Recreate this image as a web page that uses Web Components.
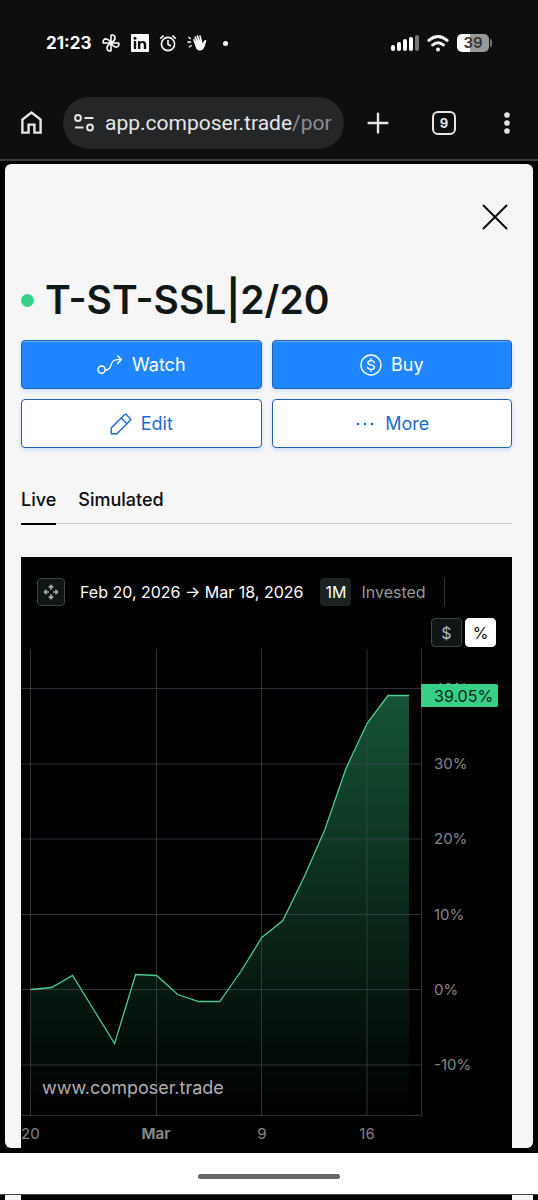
<!DOCTYPE html>
<html lang="en">
<head>
<meta charset="utf-8">
<meta name="viewport" content="width=device-width, initial-scale=1">
<title>T-ST-SSL|2/20 – Composer</title>
<style>
  html { background: #000; }
  body { margin: 0; font-family: Inter, "Liberation Sans", sans-serif; color: #0f1717; }
</style>
</head>
<body>
<phone-status time="21:23" battery="39"></phone-status>
<browser-bar tabs="9"><span slot="host">app.composer.trade</span><span slot="path">/por</span></browser-bar>
<symphony-sheet>
  <span slot="title">T-ST-SSL|2/20</span>
  <action-button slot="actions" icon="watch" primary>Watch</action-button>
  <action-button slot="actions" icon="buy" primary>Buy</action-button>
  <action-button slot="actions" icon="edit">Edit</action-button>
  <action-button slot="actions" icon="more">More</action-button>
  <view-tabs slot="tabs"></view-tabs>
  <performance-chart></performance-chart>
</symphony-sheet>
<gesture-bar></gesture-bar>

<script>
const define = (name, html, setup) => {
  const template = document.createElement('template');
  template.innerHTML = html;
  customElements.define(name, class extends HTMLElement {
    constructor() {
      super();
      this.attachShadow({ mode: 'open' }).append(template.content.cloneNode(true));
    }
    connectedCallback() { if (setup) setup(this, this.shadowRoot); }
  });
};

define('phone-status', `
<style>
  :host { display: flex; align-items: center; justify-content: space-between; height: 86px; padding: 0 46px; background: #0e0e0e; color: #fff; }
  div { display: flex; align-items: center; }
  .left { gap: 10px; }
  .right { gap: 8px; }
  #time { font-size: 17px; line-height: 24px; font-weight: 700; }
  svg { display: block; }
  .dot { width: 5px; height: 5px; border-radius: 50%; background: #fff; margin-left: 6px; }
  .battery { gap: 1px; }
  #level { width: 32px; height: 18px; border-radius: 5px; background: linear-gradient(90deg, #fff 40%, #999 40%); color: #333; font-size: 15px; line-height: 18px; font-weight: 600; text-align: center; }
  .cap { width: 2px; height: 8px; border-radius: 0 2px 2px 0; background: #777; }
</style>
<div class="left">
  <span id="time"></span>
  <svg width="20" height="20" viewBox="0 0 20 20" fill="none" stroke="#fff" stroke-width="1.6" stroke-linejoin="round">
    <path d="M10 10V2.2C13 1.4 14.4 3.6 14 5.5C13.6 7.6 12 9 10 10"/>
    <path d="M10 10H17.8C18.6 13 16.4 14.4 14.5 14C12.4 13.6 11 12 10 10"/>
    <path d="M10 10V17.8C7 18.6 5.6 16.4 6 14.5C6.4 12.4 8 11 10 10"/>
    <path d="M10 10H2.2C1.4 7 3.6 5.6 5.5 6C7.6 6.4 9 8 10 10"/>
  </svg>
  <svg width="18" height="18" viewBox="0 0 18 18"><rect width="18" height="18" rx="1" fill="#fff"/><g fill="#0e0e0e"><circle cx="4" cy="4.2" r="1.5"/><path d="M2.8 7H5.2V15H2.8ZM7 7H9.3V8.2C10.6 6.2 15.2 6.2 15.2 10.4V15H12.8V10.8C12.8 8.2 9.4 8.3 9.4 10.8V15H7Z"/></g></svg>
  <svg width="18" height="18" viewBox="0 0 18 18" fill="none" stroke="#fff" stroke-width="1.6"><circle cx="9" cy="10" r="6.6"/><path d="M9 6V10.2L11.8 12M1.2 4.6L4.6 1.6M16.8 4.6L13.4 1.6"/></svg>
  <svg width="20" height="18" viewBox="0 0 20 18"><path d="M6 5.4L7.2 4.8L9.8 9L7.2 3L8.6 2.2L11.4 7.6L9.4 1.8L10.8 1L13.2 7L12.2 1.6L13.6 1.2L15.6 9.2L17.6 6.2Q19.4 5.4 19.2 7.4L17.2 13.6C15.8 17.2 11.4 17.4 9.4 14.8Z" fill="#fff"/><path d="M1.4 3L3.8 5M.4 8H4M2 13.2L4.6 11.2" stroke="#fff" stroke-width="1.3"/></svg>
  <span class="dot"></span>
</div>
<div class="right">
  <svg width="28" height="17" viewBox="0 0 28 17" fill="#fff"><rect y="10" width="4" height="6" rx="2"/><rect x="6" y="7" width="4" height="9" rx="2"/><rect x="12" y="4" width="4" height="12" rx="2"/><rect x="18" y="2" width="4" height="14" rx="2"/><rect x="24" width="4" height="16" rx="2" fill="#777"/></svg>
  <svg width="22" height="17" viewBox="0 0 22 17" fill="none" stroke="#fff" stroke-width="2.8" stroke-linecap="round"><path d="M1.8 5.4Q11-2.4 20.2 5.4M5.6 10Q11 5.4 16.4 10"/><circle cx="11" cy="14.4" r="2" fill="#fff" stroke="none"/></svg>
  <div class="battery"><span id="level"></span><span class="cap"></span></div>
</div>`, (host, root) => {
  root.getElementById('time').textContent = host.getAttribute('time');
  root.getElementById('level').textContent = host.getAttribute('battery');
});

define('browser-bar', `
<style>
  :host { display: flex; align-items: center; height: 73px; padding: 0 28px 0 19px; background: #0e0e0e; border-bottom: 2px solid #3c3c3c; }
  button { border: 0; padding: 0; background: none; color: #e6e6e6; font: inherit; display: block; flex: none; }
  svg { display: block; }
  .address { flex: 1; min-width: 0; height: 52px; margin: 0 22px 0 19px; padding: 0 8px 0 11px; border-radius: 26px; background: #252628; display: flex; align-items: center; gap: 11px; }
  .address svg { flex: none; }
  .url { flex: 1; overflow: hidden; white-space: nowrap; text-align: left; font-family: Roboto, sans-serif; font-size: 21px; line-height: 32px; }
  .path { color: #8d8d8d; }
  .tabs { width: 24px; height: 24px; box-sizing: border-box; border: 2px solid #e6e6e6; border-radius: 6px; font-size: 13px; line-height: 20px; font-weight: 700; text-align: center; margin: 0 48px 0 42px; }
  .dots { width: 6px; }
</style>
<button aria-label="Home"><svg width="25" height="25" viewBox="0 0 25 25" fill="none" stroke="#e6e6e6" stroke-width="2.4"><path d="M3.4 22.6V9.6L12.5 2.6L21.6 9.6V22.6H15.4V14.6H9.6V22.6Z"/></svg></button>
<button class="address" aria-label="Address">
  <svg width="20" height="18" viewBox="0 0 20 18" fill="none" stroke="#e6e6e6" stroke-width="2"><circle cx="4" cy="4" r="2.9"/><path d="M10.5 4H19.5M1 13.5H9.5"/><circle cx="16" cy="13.5" r="2.9"/></svg>
  <span class="url"><slot name="host"></slot><span class="path"><slot name="path"></slot></span></span>
</button>
<button aria-label="New tab"><svg width="24" height="24" viewBox="0 0 24 24" stroke="#e6e6e6" stroke-width="2.4" stroke-linecap="round"><path d="M12 2.6V21.4M2.6 12H21.4"/></svg></button>
<button class="tabs" aria-label="Open tabs"></button>
<button class="dots" aria-label="Menu"><svg width="6" height="22" viewBox="0 0 6 22" fill="#e6e6e6"><circle cx="3" cy="3" r="2.8"/><circle cx="3" cy="11" r="2.8"/><circle cx="3" cy="19" r="2.8"/></svg></button>`,
(host, root) => { root.querySelector('.tabs').textContent = host.getAttribute('tabs'); });

define('symphony-sheet', `
<style>
  :host { display: block; margin: 3px 5px 5px; padding: 0 21px 0 16px; background: #f6f6f6; border-radius: 6px; overflow: hidden; }
  .top { display: flex; justify-content: flex-end; padding: 40px 4px 46px 0; }
  .close { border: 0; padding: 0; background: none; display: block; }
  .close svg { display: block; }
  header { display: flex; align-items: center; gap: 11px; margin-bottom: 16px; }
  .live { flex: none; width: 13px; height: 13px; border-radius: 50%; background: #37d086; }
  h1 { margin: 0; font-size: 39px; line-height: 48px; font-weight: 600; white-space: nowrap; }
  .actions { display: grid; grid-template-columns: 1fr 1fr; gap: 10px; margin-bottom: 40px; }
  .tabs { margin-bottom: 32px; }
</style>
<div class="top"><button class="close" aria-label="Close"><svg width="26" height="26" viewBox="0 0 26 26" stroke="#0c0c0c" stroke-width="2" stroke-linecap="round"><path d="M1.5 1.5L24.5 24.5M24.5 1.5L1.5 24.5"/></svg></button></div>
<header><span class="live"></span><h1><slot name="title"></slot></h1></header>
<div class="actions"><slot name="actions"></slot></div>
<div class="tabs"><slot name="tabs"></slot></div>
<slot></slot>`);

const ICONS = {
  watch: '<svg width="26" height="20" viewBox="0 0 26 20"><circle cx="4.6" cy="14.6" r="3.6"/><path d="M8.4 15C16.5 15 11.5 5 20 4.6H24.5M20.6 1L24.5 4.6L20.6 8.4"/></svg>',
  buy: '<svg width="22" height="22" viewBox="0 0 22 22"><circle cx="11" cy="11" r="10"/><path d="M11 4.6V6.6M11 15.4V17.4M14.3 8.6C14 7.2 12.6 6.6 11 6.6C9.2 6.6 7.8 7.4 7.8 8.8C7.8 12 14.4 9.8 14.4 13.2C14.4 14.6 12.8 15.4 11 15.4C9.2 15.4 7.8 14.6 7.5 13.2"/></svg>',
  edit: '<svg width="22" height="22" viewBox="0 0 22 22"><path d="M1.2 20.8V15L14.4 1.8Q15.4 .8 16.4 1.8L20.2 5.6Q21.2 6.6 20.2 7.6L7 20.8ZM11.2 5L17 10.8"/></svg>',
  more: '<svg width="22" height="22" viewBox="0 0 22 22"><g fill="currentColor" stroke="none"><circle cx="4" cy="11" r="1.3"/><circle cx="11" cy="11" r="1.3"/><circle cx="18" cy="11" r="1.3"/></g></svg>'
};

define('action-button', `
<style>
  :host { display: block; --ink: #1a6cd0; --face: #fff; --shine: #fff; }
  :host([primary]) { --ink: #fff; --face: #1f86ff; --shine: #6aaeff; }
  button { width: 100%; height: 49px; padding: 0; box-sizing: border-box; display: flex; align-items: center; justify-content: center; gap: 9px; border: 1px solid #2160b5; border-radius: 4px; background: var(--face); color: var(--ink); box-shadow: inset 0 1px 0 var(--shine), 0 2px 4px #1f86ff33; font: inherit; font-size: 18px; line-height: 24px; }
  .icon { display: flex; fill: none; stroke: currentColor; stroke-width: 1.4; stroke-linejoin: round; stroke-linecap: round; }
</style>
<button><span class="icon"></span><span><slot></slot></span></button>`,
(host, root) => { root.querySelector('.icon').innerHTML = ICONS[host.getAttribute('icon')]; });

define('view-tabs', `
<style>
  :host { display: block; }
  div { display: flex; gap: 22px; height: 37px; box-shadow: inset 0 -1px 0 #f6f6f6, inset 0 -2px 0 #c9c9c9; }
  button { border: 0; border-bottom: 2px solid transparent; padding: 0 0 11px; background: none; color: #0c0c0c; font: inherit; font-size: 18px; line-height: 24px; font-weight: 500; }
  button[aria-selected=true] { border-color: #000; }
</style>
<div role="tablist"><button role="tab" aria-selected="true">Live</button><button role="tab" aria-selected="false">Simulated</button></div>`);

define('performance-chart', `
<style>
  :host { display: block; background: #000; color: #fff; padding-top: 21px; }
  button { border: 0; padding: 0; background: none; color: inherit; font: inherit; box-sizing: border-box; height: 28px; }
  .range, .units { display: flex; align-items: center; padding: 0 16px; font-size: 16px; line-height: 28px; white-space: nowrap; }
  .expand { width: 28px; border: 1px solid #3d4545; border-radius: 4px; background: #101616; display: grid; place-items: center; margin-right: 15px; }
  .month { width: 31px; border-radius: 4px; background: #1b2323; margin: 0 10px 0 17px; }
  .muted { color: #979b9b; }
  .rule { width: 1px; height: 28px; background: #2c3333; margin-left: 18px; }
  .units { justify-content: flex-end; gap: 3px; padding-top: 12px; padding-bottom: 2px; }
  .units button { width: 31px; height: 29px; border: 1px solid #3d4545; border-radius: 4px; background: #101616; color: #b5b9b9; }
  .units button[aria-pressed=true] { background: #fff; border-color: #fff; color: #111; }
  .plot { display: block; width: 100%; height: auto; }
  .grid { stroke: #3f4850; stroke-opacity: .7; fill: none; }
  .axis { fill: #858585; font-size: 15px; }
  .mid { text-anchor: middle; }
</style>
<div class="range">
  <button class="expand" aria-label="Pan chart"><svg width="16" height="16" viewBox="0 0 16 16" fill="none" stroke="#a9adad" stroke-width="1.5"><path d="M8 6V1.6M8 10V14.4M6 8H1.6M10 8H14.4M5.8 3.6L8 1.4L10.2 3.6M5.8 12.4L8 14.6L10.2 12.4M3.6 5.8L1.4 8L3.6 10.2M12.4 5.8L14.6 8L12.4 10.2"/></svg></button>
  <span>Feb 20, 2026 → Mar 18, 2026</span>
  <button class="month">1M</button>
  <button class="muted">Invested</button>
  <span class="rule"></span>
</div>
<div class="units"><button aria-pressed="false">$</button><button aria-pressed="true">%</button></div>
<svg class="plot" viewBox="0 0 491 499" role="img" aria-label="Performance, 39.05%">
  <defs><linearGradient id="fade" x1="0" y1="46" x2="0" y2="466" gradientUnits="userSpaceOnUse"><stop offset="0" stop-color="#37d086" stop-opacity=".4"/><stop offset="1" stop-color="#37d086" stop-opacity="0"/></linearGradient></defs>
  <path id="area" fill="url(#fade)"/>
  <path class="grid" d="M9.5 0V466M135.5 0V466M240.5 0V466M346 0V466M400.5 0V466M0 39.5H400M0 115H400M0 190H400M0 265.5H400M0 340.5H400M0 416H400M0 466.5H401"/>
  <path id="line" fill="none" stroke="#4ccb90" stroke-width="1.3"/>
  <g class="axis">
    <text x="413" y="45">40%</text><text x="413" y="120">30%</text><text x="413" y="195">20%</text><text x="413" y="271">10%</text><text x="413" y="346">0%</text><text x="413" y="421">-10%</text>
    <text x="0" y="490">20</text><text class="mid" x="135" y="490" font-weight="700">Mar</text><text class="mid" x="241" y="490">9</text><text class="mid" x="346" y="490">16</text>
  </g>
  <path d="M400 35H475Q477 35 477 37V56Q477 58 475 58H400Z" fill="#37d086"/>
  <text x="413" y="53" font-size="16" fill="#0b2418">39.05%</text>
  <text x="21" y="445" font-size="18" fill="#b0b0b0">www.composer.trade</text>
</svg>`, (host, root) => {
  const heights = [340, 338, 326, 360, 394, 325, 326, 345, 352, 352, 322, 288, 271, 228, 180, 119, 74, 46, 46];
  const path = 'M' + heights.map((y, i) => `${9.5 + i * 21.03} ${y + .5}`).join('L');
  root.getElementById('line').setAttribute('d', path);
  root.getElementById('area').setAttribute('d', path + 'V466H9.5Z');
});

define('gesture-bar', `
<style>
  :host { display: block; }
  .bar { display: flex; align-items: center; justify-content: center; height: 42px; padding-top: 5px; box-sizing: border-box; background: #fff; border-bottom: 1px solid #444; }
  .pill { width: 142px; height: 5px; border-radius: 3px; background: #666; }
  .under { display: flex; justify-content: space-between; height: 5px; padding: 0 5px; }
  .under span { width: 16px; background: #f6f6f6; }
  .under span + span { width: 21px; }
</style>
<div class="bar"><span class="pill"></span></div>
<div class="under"><span></span><span></span></div>`);
</script>
</body>
</html>
